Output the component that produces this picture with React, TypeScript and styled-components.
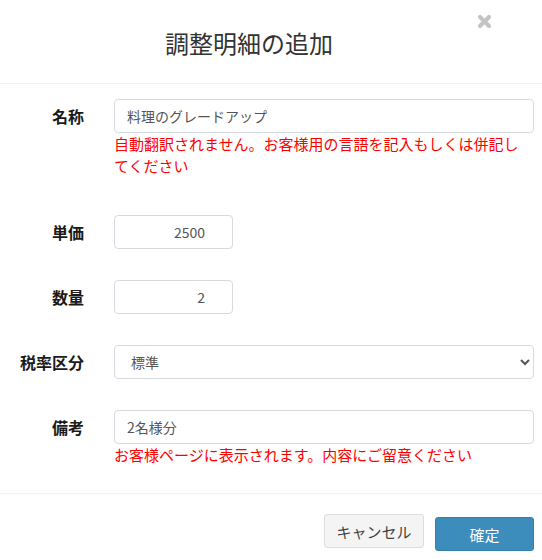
import styled, { createGlobalStyle } from 'styled-components'

const GlobalStyle = createGlobalStyle`
  * {
    box-sizing: border-box;
  }

  body {
    margin: 0;
    background: #fff;
    font-family: 'Noto Sans CJK JP', 'Noto Sans', sans-serif;
    color: #333;
  }
`

const Modal = styled.div`
  width: 542px;
  height: 560px;
  overflow: hidden;
  background: #fff;
`

const Header = styled.header`
  position: relative;
  display: flex;
  align-items: center;
  height: 84px;
  padding: 3px 59px 0 15px;
  border-bottom: 1px solid #f2f2f2;
`

const Title = styled.h4`
  flex: 1;
  margin: 0;
  text-align: center;
  font-size: 24px;
  font-weight: 400;
  line-height: 1;
  color: #333;
`

const CloseButton = styled.button`
  position: absolute;
  top: 14px;
  right: 50px;
  width: 15px;
  height: 15px;
  padding: 0;
  border: 0;
  background: none;
  color: #c4c4c4;
  cursor: pointer;
`

const Body = styled.div`
  display: flex;
  flex-direction: column;
  gap: 31px;
  padding: 15px 8px 20px 0;
`

const FormRow = styled.div`
  display: grid;
  grid-template-columns: 84px 1fr;
  column-gap: 30px;
`

const Label = styled.label`
  text-align: right;
  font-size: 16px;
  font-weight: 700;
  line-height: 34px;
  color: #1a1a1a;
`

const Field = styled.div`
  display: flex;
  flex-direction: column;
`

const Input = styled.input<{ $short?: boolean; $number?: boolean }>`
  width: ${(p) => (p.$short ? '119px' : '100%')};
  height: 34px;
  padding: ${(p) => (p.$number ? '0 27px 0 12px' : '0 12px')};
  border: 1px solid #d7dae0;
  border-radius: 4px;
  font-family: inherit;
  font-size: 14px;
  color: #555;
  text-align: ${(p) => (p.$number ? 'right' : 'left')};
  outline: none;
`

const Select = styled.select`
  width: 100%;
  height: 34px;
  padding: 0 8px 0 12px;
  border: 1px solid #d7dae0;
  border-radius: 4px;
  background: #fff;
  font-family: inherit;
  font-size: 14px;
  color: #555;
  outline: none;
`

const Help = styled.p`
  margin: 0 0 7px;
  padding-right: 6px;
  font-size: 15px;
  line-height: 22px;
  color: #f00;
`

const Footer = styled.footer`
  display: flex;
  justify-content: flex-end;
  align-items: flex-start;
  gap: 11px;
  padding: 20px 8px 0 0;
  border-top: 1px solid #f2f2f2;
`

const Button = styled.button<{ $primary?: boolean }>`
  width: ${(p) => (p.$primary ? '99px' : '100px')};
  height: 34px;
  margin-top: ${(p) => (p.$primary ? '3px' : '0')};
  border: 1px solid ${(p) => (p.$primary ? '#367fa9' : '#ddd')};
  border-radius: 3px;
  background: ${(p) => (p.$primary ? '#3c8dbc' : '#f4f4f4')};
  color: ${(p) => (p.$primary ? '#fff' : '#444')};
  font-family: inherit;
  font-size: 15px;
  cursor: pointer;
`

const CloseIcon = () => (
  <svg width="15" height="15" viewBox="0 0 15 15">
    <path
      d="M3 3 L12 12 M12 3 L3 12"
      stroke="currentColor"
      strokeWidth="4.2"
      strokeLinecap="round"
    />
  </svg>
)

const App = () => {
  return (
    <Modal>
      <GlobalStyle />
      <Header>
        <Title>調整明細の追加</Title>
        <CloseButton aria-label="close">
          <CloseIcon />
        </CloseButton>
      </Header>
      <Body>
        <FormRow>
          <Label>名称</Label>
          <Field>
            <Input defaultValue="料理のグレードアップ" />
            <Help>
              自動翻訳されません。お客様用の言語を記入もしくは併記してください
            </Help>
          </Field>
        </FormRow>
        <FormRow>
          <Label>単価</Label>
          <Field>
            <Input $short $number defaultValue="2500" />
          </Field>
        </FormRow>
        <FormRow>
          <Label>数量</Label>
          <Field>
            <Input $short $number defaultValue="2" />
          </Field>
        </FormRow>
        <FormRow>
          <Label>税率区分</Label>
          <Field>
            <Select defaultValue="standard">
              <option value="standard">標準</option>
              <option value="reduced">軽減</option>
            </Select>
          </Field>
        </FormRow>
        <FormRow>
          <Label>備考</Label>
          <Field>
            <Input defaultValue="2名様分" />
            <Help>お客様ページに表示されます。内容にご留意ください</Help>
          </Field>
        </FormRow>
      </Body>
      <Footer>
        <Button>キャンセル</Button>
        <Button $primary>確定</Button>
      </Footer>
    </Modal>
  )
}

export default App
